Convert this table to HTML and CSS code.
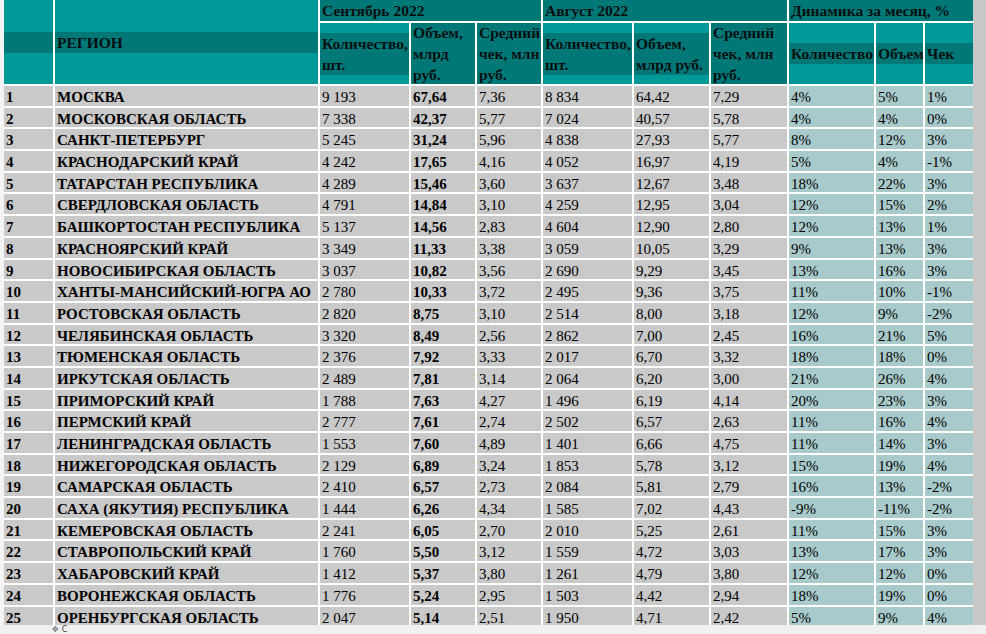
FILE: index.html
```html
<!DOCTYPE html>
<html lang="ru">
<head>
<meta charset="utf-8">
<title>Регионы</title>
<link rel="stylesheet" href="styles.css">
</head>
<body>
<div class="page">
  <div class="view">
    <div class="edge"></div>
    <div class="tbl">
      <div class="h rank"><div class="p">&nbsp;</div></div>
      <div class="h region"><div class="p">РЕГИОН</div></div>
      <div class="h m sep"><div class="p">Сентябрь 2022</div></div>
      <div class="h m aug"><div class="p">Август 2022</div></div>
      <div class="h m dyn"><div class="p">Динамика за месяц, %</div></div>

      <div class="h"><div class="p">Количество,<br>шт.</div></div>
      <div class="h"><div class="p">Объем,<br>млрд<br>руб.</div></div>
      <div class="h"><div class="p">Средний<br>чек, млн<br>руб.</div></div>
      <div class="h"><div class="p">Количество,<br>шт.</div></div>
      <div class="h"><div class="p">Объем,<br>млрд руб.</div></div>
      <div class="h"><div class="p">Средний<br>чек, млн<br>руб.</div></div>
      <div class="h"><div class="p">Количество</div></div>
      <div class="h"><div class="p">Объем</div></div>
      <div class="h"><div class="p">Чек</div></div>

      <div class="c b">1</div><div class="c b">МОСКВА</div><div class="c">9 193</div><div class="c b">67,64</div><div class="c">7,36</div><div class="c">8 834</div><div class="c">64,42</div><div class="c">7,29</div><div class="c d">4%</div><div class="c d">5%</div><div class="c d">1%</div>
      <div class="c b">2</div><div class="c b">МОСКОВСКАЯ ОБЛАСТЬ</div><div class="c">7 338</div><div class="c b">42,37</div><div class="c">5,77</div><div class="c">7 024</div><div class="c">40,57</div><div class="c">5,78</div><div class="c d">4%</div><div class="c d">4%</div><div class="c d">0%</div>
      <div class="c b">3</div><div class="c b">САНКТ-ПЕТЕРБУРГ</div><div class="c">5 245</div><div class="c b">31,24</div><div class="c">5,96</div><div class="c">4 838</div><div class="c">27,93</div><div class="c">5,77</div><div class="c d">8%</div><div class="c d">12%</div><div class="c d">3%</div>
      <div class="c b">4</div><div class="c b">КРАСНОДАРСКИЙ КРАЙ</div><div class="c">4 242</div><div class="c b">17,65</div><div class="c">4,16</div><div class="c">4 052</div><div class="c">16,97</div><div class="c">4,19</div><div class="c d">5%</div><div class="c d">4%</div><div class="c d">-1%</div>
      <div class="c b">5</div><div class="c b">ТАТАРСТАН РЕСПУБЛИКА</div><div class="c">4 289</div><div class="c b">15,46</div><div class="c">3,60</div><div class="c">3 637</div><div class="c">12,67</div><div class="c">3,48</div><div class="c d">18%</div><div class="c d">22%</div><div class="c d">3%</div>
      <div class="c b">6</div><div class="c b">СВЕРДЛОВСКАЯ ОБЛАСТЬ</div><div class="c">4 791</div><div class="c b">14,84</div><div class="c">3,10</div><div class="c">4 259</div><div class="c">12,95</div><div class="c">3,04</div><div class="c d">12%</div><div class="c d">15%</div><div class="c d">2%</div>
      <div class="c b">7</div><div class="c b">БАШКОРТОСТАН РЕСПУБЛИКА</div><div class="c">5 137</div><div class="c b">14,56</div><div class="c">2,83</div><div class="c">4 604</div><div class="c">12,90</div><div class="c">2,80</div><div class="c d">12%</div><div class="c d">13%</div><div class="c d">1%</div>
      <div class="c b">8</div><div class="c b">КРАСНОЯРСКИЙ КРАЙ</div><div class="c">3 349</div><div class="c b">11,33</div><div class="c">3,38</div><div class="c">3 059</div><div class="c">10,05</div><div class="c">3,29</div><div class="c d">9%</div><div class="c d">13%</div><div class="c d">3%</div>
      <div class="c b">9</div><div class="c b">НОВОСИБИРСКАЯ ОБЛАСТЬ</div><div class="c">3 037</div><div class="c b">10,82</div><div class="c">3,56</div><div class="c">2 690</div><div class="c">9,29</div><div class="c">3,45</div><div class="c d">13%</div><div class="c d">16%</div><div class="c d">3%</div>
      <div class="c b">10</div><div class="c b">ХАНТЫ-МАНСИЙСКИЙ-ЮГРА АО</div><div class="c">2 780</div><div class="c b">10,33</div><div class="c">3,72</div><div class="c">2 495</div><div class="c">9,36</div><div class="c">3,75</div><div class="c d">11%</div><div class="c d">10%</div><div class="c d">-1%</div>
      <div class="c b">11</div><div class="c b">РОСТОВСКАЯ ОБЛАСТЬ</div><div class="c">2 820</div><div class="c b">8,75</div><div class="c">3,10</div><div class="c">2 514</div><div class="c">8,00</div><div class="c">3,18</div><div class="c d">12%</div><div class="c d">9%</div><div class="c d">-2%</div>
      <div class="c b">12</div><div class="c b">ЧЕЛЯБИНСКАЯ ОБЛАСТЬ</div><div class="c">3 320</div><div class="c b">8,49</div><div class="c">2,56</div><div class="c">2 862</div><div class="c">7,00</div><div class="c">2,45</div><div class="c d">16%</div><div class="c d">21%</div><div class="c d">5%</div>
      <div class="c b">13</div><div class="c b">ТЮМЕНСКАЯ ОБЛАСТЬ</div><div class="c">2 376</div><div class="c b">7,92</div><div class="c">3,33</div><div class="c">2 017</div><div class="c">6,70</div><div class="c">3,32</div><div class="c d">18%</div><div class="c d">18%</div><div class="c d">0%</div>
      <div class="c b">14</div><div class="c b">ИРКУТСКАЯ ОБЛАСТЬ</div><div class="c">2 489</div><div class="c b">7,81</div><div class="c">3,14</div><div class="c">2 064</div><div class="c">6,20</div><div class="c">3,00</div><div class="c d">21%</div><div class="c d">26%</div><div class="c d">4%</div>
      <div class="c b">15</div><div class="c b">ПРИМОРСКИЙ КРАЙ</div><div class="c">1 788</div><div class="c b">7,63</div><div class="c">4,27</div><div class="c">1 496</div><div class="c">6,19</div><div class="c">4,14</div><div class="c d">20%</div><div class="c d">23%</div><div class="c d">3%</div>
      <div class="c b">16</div><div class="c b">ПЕРМСКИЙ КРАЙ</div><div class="c">2 777</div><div class="c b">7,61</div><div class="c">2,74</div><div class="c">2 502</div><div class="c">6,57</div><div class="c">2,63</div><div class="c d">11%</div><div class="c d">16%</div><div class="c d">4%</div>
      <div class="c b">17</div><div class="c b">ЛЕНИНГРАДСКАЯ ОБЛАСТЬ</div><div class="c">1 553</div><div class="c b">7,60</div><div class="c">4,89</div><div class="c">1 401</div><div class="c">6,66</div><div class="c">4,75</div><div class="c d">11%</div><div class="c d">14%</div><div class="c d">3%</div>
      <div class="c b">18</div><div class="c b">НИЖЕГОРОДСКАЯ ОБЛАСТЬ</div><div class="c">2 129</div><div class="c b">6,89</div><div class="c">3,24</div><div class="c">1 853</div><div class="c">5,78</div><div class="c">3,12</div><div class="c d">15%</div><div class="c d">19%</div><div class="c d">4%</div>
      <div class="c b">19</div><div class="c b">САМАРСКАЯ ОБЛАСТЬ</div><div class="c">2 410</div><div class="c b">6,57</div><div class="c">2,73</div><div class="c">2 084</div><div class="c">5,81</div><div class="c">2,79</div><div class="c d">16%</div><div class="c d">13%</div><div class="c d">-2%</div>
      <div class="c b">20</div><div class="c b">САХА (ЯКУТИЯ) РЕСПУБЛИКА</div><div class="c">1 444</div><div class="c b">6,26</div><div class="c">4,34</div><div class="c">1 585</div><div class="c">7,02</div><div class="c">4,43</div><div class="c d">-9%</div><div class="c d">-11%</div><div class="c d">-2%</div>
      <div class="c b">21</div><div class="c b">КЕМЕРОВСКАЯ ОБЛАСТЬ</div><div class="c">2 241</div><div class="c b">6,05</div><div class="c">2,70</div><div class="c">2 010</div><div class="c">5,25</div><div class="c">2,61</div><div class="c d">11%</div><div class="c d">15%</div><div class="c d">3%</div>
      <div class="c b">22</div><div class="c b">СТАВРОПОЛЬСКИЙ КРАЙ</div><div class="c">1 760</div><div class="c b">5,50</div><div class="c">3,12</div><div class="c">1 559</div><div class="c">4,72</div><div class="c">3,03</div><div class="c d">13%</div><div class="c d">17%</div><div class="c d">3%</div>
      <div class="c b">23</div><div class="c b">ХАБАРОВСКИЙ КРАЙ</div><div class="c">1 412</div><div class="c b">5,37</div><div class="c">3,80</div><div class="c">1 261</div><div class="c">4,79</div><div class="c">3,80</div><div class="c d">12%</div><div class="c d">12%</div><div class="c d">0%</div>
      <div class="c b">24</div><div class="c b">ВОРОНЕЖСКАЯ ОБЛАСТЬ</div><div class="c">1 776</div><div class="c b">5,24</div><div class="c">2,95</div><div class="c">1 503</div><div class="c">4,42</div><div class="c">2,94</div><div class="c d">18%</div><div class="c d">19%</div><div class="c d">0%</div>
      <div class="c b">25</div><div class="c b">ОРЕНБУРГСКАЯ ОБЛАСТЬ</div><div class="c">2 047</div><div class="c b">5,14</div><div class="c">2,51</div><div class="c">1 950</div><div class="c">4,71</div><div class="c">2,42</div><div class="c d">5%</div><div class="c d">9%</div><div class="c d">4%</div>
    </div>
    <div class="fill"></div>
  </div>
  <div class="bar"><span class="handle">✥</span><span class="cap">С</span></div>
</div>
</body>
</html>
```

FILE: styles.css
```css
html, body {
  margin: 0;
  padding: 0;
  height: 634px;
  overflow: hidden;
  background: #f0f0f0;
}

.page {
  display: flex;
  flex-direction: column;
  height: 634px;
  font-family: "Liberation Serif", "DejaVu Serif", serif;
  color: #000;
}

.view {
  height: 625px;
  flex: none;
  display: flex;
  overflow: hidden;
  background: #c8c8c8;
}

.edge {
  width: 4px;
  flex: none;
  background: #f4f4f4;
}

.tbl {
  flex: none;
  display: grid;
  grid-template-columns: 49px 263px 89px 64px 64px 89px 75px 76px 85px 47px 48px;
  grid-template-rows: 21px 61px repeat(25, 19.7px);
  gap: 2px;
  align-content: start;
  background: #fff;
}

.fill {
  flex: 1;
  background: #c8c8c8;
}

/* header */
.h {
  background: #009999;
  display: flex;
  flex-direction: column;
  justify-content: center;
  overflow: hidden;
  font-weight: bold;
  font-size: 15.5px;
  color: #061010;
}

.h .p {
  background: #007878;
  line-height: 21px;
  padding: 0 1px 0 2px;
  white-space: nowrap;
}

.rank { grid-row: 1 / 3; grid-column: 1; }
.region { grid-row: 1 / 3; grid-column: 2; }
.sep { grid-row: 1; grid-column: 3 / 6; }
.aug { grid-row: 1; grid-column: 6 / 9; }
.dyn { grid-row: 1; grid-column: 9 / 12; }

.m { background: #007878; justify-content: flex-start; }

/* body cells */
.c {
  background: #c9c9c9;
  font-size: 15px;
  line-height: 19.7px;
  padding: 2px 2px 0;
  white-space: nowrap;
  overflow: hidden;
}

.d { background: #a9caca; }
.b { font-weight: bold; }

/* bottom bar */
.bar {
  flex: 1;
  background: #f0f0f0;
  display: flex;
  align-items: flex-start;
  gap: 3px;
  padding-left: 52px;
  overflow: hidden;
  font-family: "DejaVu Sans", sans-serif;
  font-size: 8px;
  line-height: 9px;
  color: #777;
}

.cap { color: #444; }
```
